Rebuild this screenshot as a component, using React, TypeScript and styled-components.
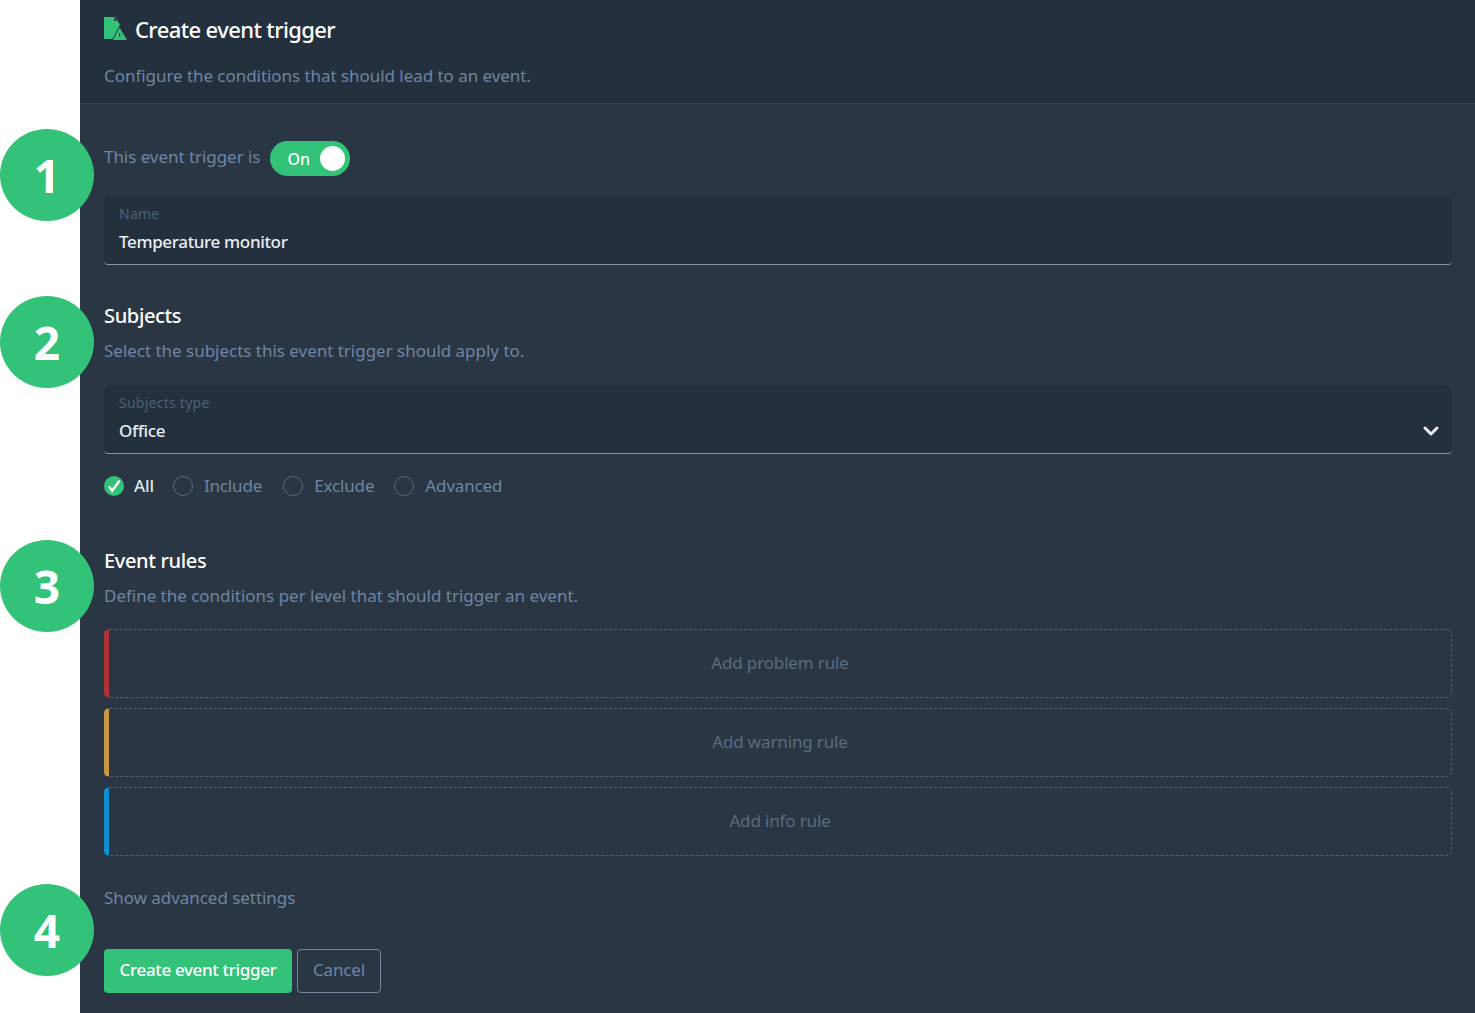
import styled, { createGlobalStyle } from "styled-components";
import { ChevronDown } from "lucide-react";

const GlobalStyle = createGlobalStyle`
  html, body {
    margin: 0;
    padding: 0;
    background: #ffffff;
  }
  body {
    font-family: "Noto Sans", "Open Sans", sans-serif;
    overflow: hidden;
  }
`;

const Page = styled.div`
  position: relative;
  width: 1475px;
  height: 1013px;
  padding-left: 80px;
  box-sizing: border-box;
  overflow: hidden;
`;

const Panel = styled.main`
  height: 100%;
  background: #2b3644;
  display: flex;
  flex-direction: column;
`;

const Header = styled.header`
  height: 104px;
  box-sizing: border-box;
  background: #24303e;
  border-bottom: 1px solid #364252;
  padding: 13px 24px 0;
`;

const TitleRow = styled.div`
  display: flex;
  align-items: center;
  gap: 8px;
  height: 32px;
`;

const Title = styled.h1`
  margin: 0;
  font-size: 22px;
  font-weight: 500;
  line-height: 32px;
  color: #ffffff;
  letter-spacing: -0.6px;
`;

const Muted = styled.p`
  margin: 0;
  font-size: 17px;
  line-height: 24px;
  color: #6d85a3;
  letter-spacing: -0.05px;
`;

const HeaderText = styled(Muted)`
  margin-top: 19px;
`;

const Body = styled.div`
  flex: 1;
  display: flex;
  flex-direction: column;
  padding: 37px 23px 0 24px;
`;

const ToggleRow = styled.div`
  display: flex;
  align-items: center;
  gap: 10px;
  height: 35px;
`;

const ToggleLabel = styled(Muted)`
  padding-bottom: 3px;
`;

const Toggle = styled.div`
  width: 80px;
  height: 35px;
  box-sizing: border-box;
  border-radius: 18px;
  background: #32c278;
  display: flex;
  align-items: center;
  justify-content: space-between;
  padding: 0 5px 0 17px;
  color: #ffffff;
  font-size: 16px;
  font-weight: 500;
`;

const Knob = styled.span`
  width: 25px;
  height: 25px;
  border-radius: 50%;
  background: #ffffff;
`;

const Field = styled.div<{ $top?: number }>`
  position: relative;
  height: 69px;
  box-sizing: border-box;
  margin-top: ${(p) => p.$top ?? 0}px;
  padding: 8px 15px 0;
  background: #24303e;
  border-bottom: 1px solid #8494aa;
  border-radius: 6px 6px 4px 4px;
`;

const FieldLabel = styled.div`
  font-size: 14px;
  line-height: 20px;
  color: #4d5f78;
  letter-spacing: 0.25px;
`;

const FieldValue = styled.div`
  margin-top: 6px;
  font-size: 17px;
  font-weight: 500;
  line-height: 24px;
  color: #e9edf2;
  letter-spacing: -0.35px;
`;

const Chevron = styled(ChevronDown)`
  position: absolute;
  right: 9px;
  top: 34px;
  color: #e9edf2;
`;

const SectionTitle = styled.h2<{ $top: number }>`
  margin: ${(p) => p.$top}px 0 0;
  font-size: 20px;
  font-weight: 500;
  line-height: 28px;
  color: #ffffff;
  letter-spacing: -0.35px;
`;

const SectionText = styled(Muted)`
  margin-top: 9px;
  letter-spacing: -0.02px;
`;

const RadioRow = styled.div`
  display: flex;
  align-items: center;
  height: 24px;
  margin-top: 20px;
`;

const RadioItem = styled.div<{ $gap: number; $inner: number }>`
  display: flex;
  align-items: center;
  gap: ${(p) => p.$inner}px;
  margin-right: ${(p) => p.$gap}px;
`;

const RadioCircle = styled.span`
  width: 20px;
  height: 20px;
  box-sizing: border-box;
  border-radius: 50%;
  border: 1.5px solid #5a6879;
`;

const RadioText = styled.span<{ $active?: boolean }>`
  font-size: 17px;
  line-height: 24px;
  font-weight: ${(p) => (p.$active ? 500 : 400)};
  color: ${(p) => (p.$active ? "#dfe5ec" : "#6d85a3")};
  letter-spacing: -0.15px;
`;

const RuleList = styled.div`
  display: flex;
  flex-direction: column;
  gap: 10px;
  margin-top: 21px;
`;

const Rule = styled.div<{ $color: string }>`
  height: 69px;
  box-sizing: border-box;
  display: flex;
  align-items: center;
  justify-content: center;
  padding-bottom: 3px;
  border: 1px dashed #546274;
  border-left: 5px solid ${(p) => p.$color};
  border-radius: 5px;
  font-size: 17px;
  color: #5b6a7e;
  letter-spacing: -0.15px;
`;

const AdvancedLink = styled(Muted)`
  margin-top: 30px;
`;

const Actions = styled.div`
  display: flex;
  gap: 5px;
  margin-top: 39px;
`;

const PrimaryButton = styled.button`
  width: 188px;
  height: 44px;
  border: 0;
  border-radius: 4px;
  background: #32c278;
  color: #ffffff;
  font-family: inherit;
  font-size: 17px;
  font-weight: 500;
  letter-spacing: -0.35px;
  padding: 0 0 4px;
`;

const GhostButton = styled.button`
  width: 84px;
  height: 44px;
  box-sizing: border-box;
  border: 1px solid #75849a;
  border-radius: 4px;
  background: transparent;
  color: #6d85a3;
  font-family: inherit;
  font-size: 17px;
  letter-spacing: -0.15px;
  padding: 0 0 4px;
`;

const Badge = styled.div<{ $top: number }>`
  position: absolute;
  left: 0;
  top: ${(p) => p.$top}px;
  width: 94px;
  height: 92px;
  border-radius: 50%;
  background: #32c278;
  color: #ffffff;
  display: flex;
  align-items: center;
  justify-content: center;
  font-family: "Open Sans", sans-serif;
  font-size: 46px;
  font-weight: 700;
`;

const IconWrap = styled.span`
  display: flex;
  margin-top: -1px;
`;

const CheckedRadio = () => (
  <svg width="20" height="20" viewBox="0 0 20 20">
    <circle cx="10" cy="10" r="10" fill="#32c278" />
    <path d="M5 10.5l3.2 4.2L15.5 4.5" fill="none" stroke="#fff" strokeWidth="2.4" />
  </svg>
);

const TriggerIcon = () => (
  <IconWrap>
    <svg width="23" height="23" viewBox="0 0 23 23">
      <path d="M0 0H11L16 7.5 9.5 22H0z" fill="#32c278" />
      <path d="M10.5 0l-.6 3.8 3 .3z" fill="#24303e" />
      <path d="M15.5 9L23.5 23.5H7.5z" fill="#24303e" />
      <path d="M15.5 10.5L23 23H9z" fill="#32c278" />
      <rect x="15" y="16" width="1.2" height="3.5" fill="#24303e" />
    </svg>
  </IconWrap>
);

const badges = [
  { n: 1, top: 129 },
  { n: 2, top: 296 },
  { n: 3, top: 540 },
  { n: 4, top: 884 },
];

const rules = [
  { label: "Add problem rule", color: "#ad3334" },
  { label: "Add warning rule", color: "#c9973f" },
  { label: "Add info rule", color: "#0f8fce" },
];

const radios = [
  { label: "Include", gap: 21 },
  { label: "Exclude", gap: 20 },
  { label: "Advanced", gap: 0 },
];

const App = () => {
  return (
    <Page>
      <GlobalStyle />
      <Panel>
        <Header>
          <TitleRow>
            <TriggerIcon />
            <Title>Create event trigger</Title>
          </TitleRow>
          <HeaderText>Configure the conditions that should lead to an event.</HeaderText>
        </Header>
        <Body>
          <ToggleRow>
            <ToggleLabel>This event trigger is</ToggleLabel>
            <Toggle>
              On
              <Knob />
            </Toggle>
          </ToggleRow>
          <Field $top={20}>
            <FieldLabel>Name</FieldLabel>
            <FieldValue>Temperature monitor</FieldValue>
          </Field>

          <SectionTitle $top={37}>Subjects</SectionTitle>
          <SectionText>Select the subjects this event trigger should apply to.</SectionText>
          <Field $top={22}>
            <FieldLabel>Subjects type</FieldLabel>
            <FieldValue>Office</FieldValue>
            <Chevron size={24} strokeWidth={3} />
          </Field>
          <RadioRow>
            <RadioItem $gap={19} $inner={10}>
              <CheckedRadio />
              <RadioText $active>All</RadioText>
            </RadioItem>
            {radios.map((r) => (
              <RadioItem key={r.label} $gap={r.gap} $inner={11}>
                <RadioCircle />
                <RadioText>{r.label}</RadioText>
              </RadioItem>
            ))}
          </RadioRow>

          <SectionTitle $top={49}>Event rules</SectionTitle>
          <SectionText>Define the conditions per level that should trigger an event.</SectionText>
          <RuleList>
            {rules.map((r) => (
              <Rule key={r.label} $color={r.color}>
                {r.label}
              </Rule>
            ))}
          </RuleList>

          <AdvancedLink>Show advanced settings</AdvancedLink>
          <Actions>
            <PrimaryButton>Create event trigger</PrimaryButton>
            <GhostButton>Cancel</GhostButton>
          </Actions>
        </Body>
      </Panel>
      {badges.map((b) => (
        <Badge key={b.n} $top={b.top}>
          {b.n}
        </Badge>
      ))}
    </Page>
  );
};

export default App;
